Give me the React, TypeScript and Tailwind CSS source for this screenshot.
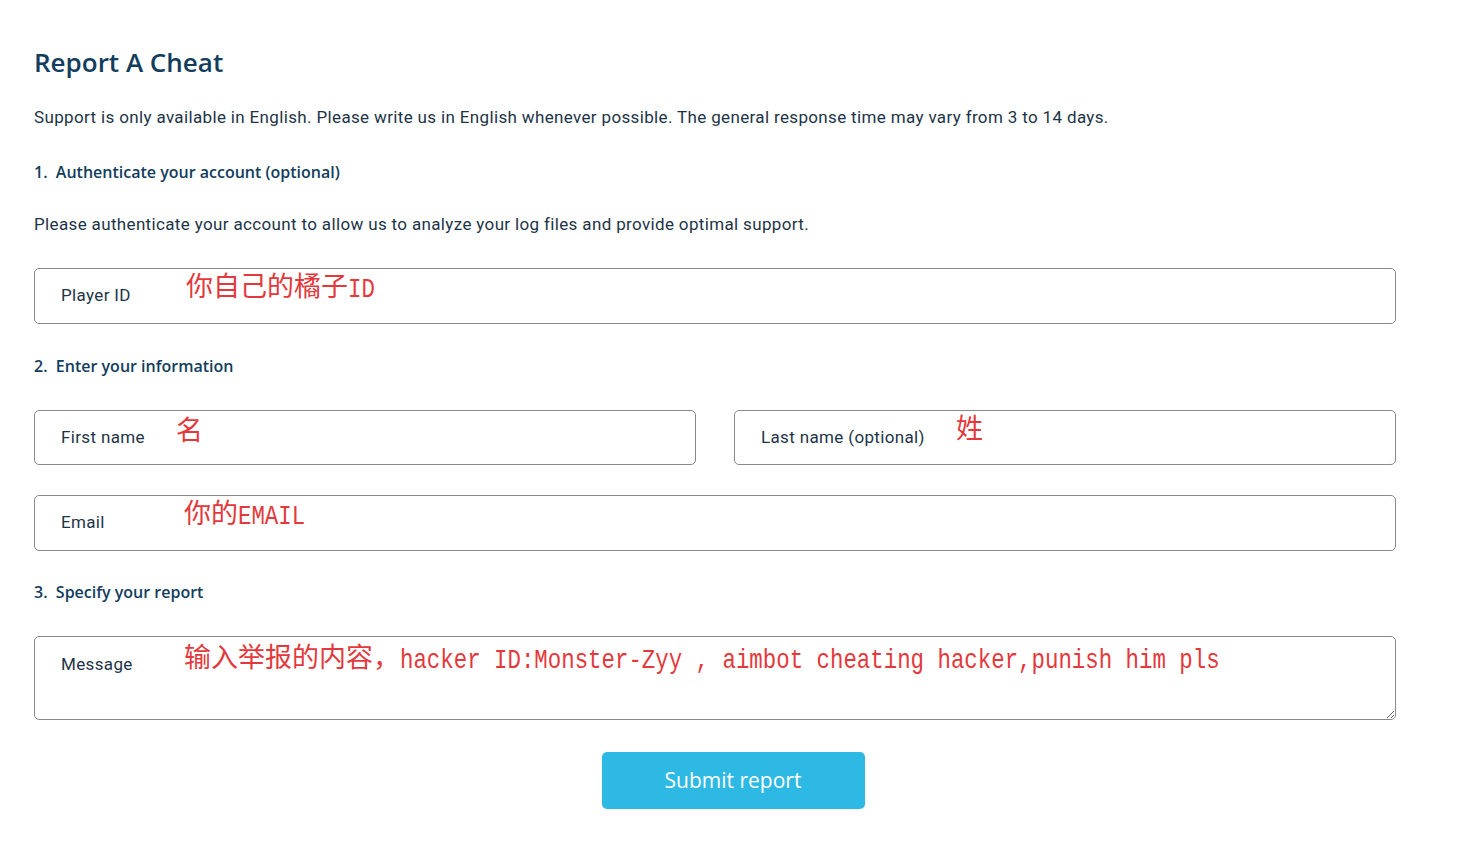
import React from 'react';

const body = { fontFamily: 'Roboto, "Liberation Sans", sans-serif' };
const head = { fontFamily: '"Open Sans", "Noto Sans", sans-serif' };

function Note({ cjk, latin }: { cjk?: string; latin?: string }) {
  return (
    <span className="whitespace-pre text-[#e4393c] leading-none">
      {cjk && (
        <span className="text-[27px]" style={{ fontFamily: '"Noto Sans CJK SC", sans-serif' }}>
          {cjk}
        </span>
      )}
      {latin && (
        <span
          className="inline-block text-[22.4px] scale-y-125"
          style={{ fontFamily: '"Liberation Mono", monospace' }}
        >
          {latin}
        </span>
      )}
    </span>
  );
}

function Field({
  label,
  className,
  children,
}: {
  label: string;
  className?: string;
  children?: React.ReactNode;
}) {
  return (
    <div className={`relative border border-[#8a8a8a] rounded-[5px] flex items-center pl-[26px] ${className || ''}`}>
      <span className="text-[17px] tracking-[0.35px] text-[#1d3447]" style={body}>{label}</span>
      {children}
    </div>
  );
}

export default function App() {
  return (
    <div className="bg-white min-h-[854px] w-[1460px] pt-[46px]" style={body}>
      <div className="pl-[34px] w-[1396px]">
        <h1 className="text-[26px] leading-[32px] font-semibold text-[#123d5c]" style={head}>
          Report A Cheat
        </h1>
        <p className="mt-[27px] text-[17px] tracking-[0.35px] leading-[24px] text-[#1d3447]">
          Support is only available in English. Please write us in English whenever possible. The general response time may vary from 3 to 14 days.
        </p>
        <h2 className="mt-[31px] text-[16px] leading-[24px] font-semibold text-[#123d5c]" style={head}>
          1.&nbsp; Authenticate your account (optional)
        </h2>
        <p className="mt-[28px] text-[17px] tracking-[0.35px] leading-[24px] text-[#1d3447]">
          Please authenticate your account to allow us to analyze your log files and provide optimal support.
        </p>

        <Field label="Player ID" className="mt-[32px] h-[56px]">
          <div className="absolute left-[151px] top-[2px]">
            <Note cjk="你自己的橘子" latin="ID" />
          </div>
        </Field>

        <h2 className="mt-[30px] text-[16px] leading-[24px] font-semibold text-[#123d5c]" style={head}>
          2.&nbsp; Enter your information
        </h2>

        <div className="mt-[32px] grid grid-cols-2 gap-[38px]">
          <Field label="First name" className="h-[55px]">
            <div className="absolute left-[141px] top-[4px]">
              <Note cjk="名" />
            </div>
          </Field>
          <Field label="Last name (optional)" className="h-[55px]">
            <div className="absolute left-[221px] top-[2px]">
              <Note cjk="姓" />
            </div>
          </Field>
        </div>

        <Field label="Email" className="mt-[30px] h-[56px]">
          <div className="absolute left-[149px] top-[2px]">
            <Note cjk="你的" latin="EMAIL" />
          </div>
        </Field>

        <h2 className="mt-[29px] text-[16px] leading-[24px] font-semibold text-[#123d5c]" style={head}>
          3.&nbsp; Specify your report
        </h2>

        <div className="relative mt-[32px]">
          <textarea
            placeholder="Message"
            className="block w-full h-[84px] border border-[#8a8a8a] rounded-[5px] pl-[26px] pt-[15px] text-[17px] tracking-[0.35px] leading-[24px] placeholder:text-[#1d3447] outline-none"
            style={body}
          />
          <div className="absolute left-[150px] top-[6px] pointer-events-none">
            <Note cjk="输入举报的内容，" latin="hacker ID:Monster-Zyy , aimbot cheating hacker,punish him pls" />
          </div>
        </div>
      </div>

      <div className="mt-[32px] flex justify-center pl-[6px]">
        <button className="w-[263px] h-[57px] rounded-[5px] bg-[#2db9e4] text-white text-[21px]" style={head}>
          Submit report
        </button>
      </div>
    </div>
  );
}
